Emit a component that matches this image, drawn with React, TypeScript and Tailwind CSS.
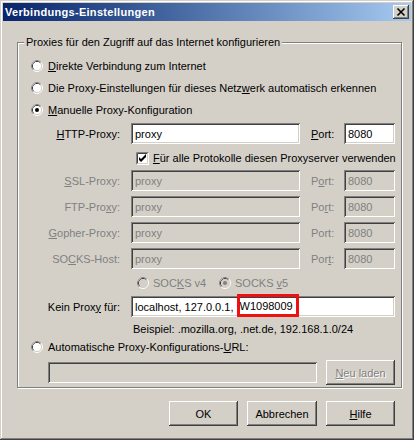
import type { ReactNode } from "react";

const sunken =
  "shadow-[inset_1px_1px_0_#808080,inset_-1px_-1px_0_#ffffff,inset_2px_2px_0_#404040,inset_-2px_-2px_0_#d4d0c8]";
const raised =
  "shadow-[inset_-1px_-1px_0_#404040,inset_1px_1px_0_#ffffff,inset_-2px_-2px_0_#808080,inset_2px_2px_0_#d4d0c8]";

function Radio({ checked = false, disabled = false }: { checked?: boolean; disabled?: boolean }) {
  return (
    <svg width="12" height="12" viewBox="0 0 12 12" className="shrink-0">
      <circle cx="6" cy="6" r="5.5" fill="none" stroke="#ffffff" />
      <path d="M2.11 9.89 A5.5 5.5 0 0 1 9.89 2.11" fill="none" stroke="#808080" />
      <circle cx="6" cy="6" r="4.5" fill="none" stroke="#d4d0c8" />
      <path d="M2.82 9.18 A4.5 4.5 0 0 1 9.18 2.82" fill="none" stroke="#404040" />
      <circle cx="6" cy="6" r="4" fill={disabled ? "#d4d0c8" : "#ffffff"} />
      {checked && <circle cx="6" cy="6" r="2" fill={disabled ? "#808080" : "#000000"} />}
    </svg>
  );
}

function Check() {
  return (
    <svg width="13" height="13" viewBox="0 0 13 13" className="shrink-0">
      <rect x="0" y="0" width="13" height="13" fill="#ffffff" />
      <path d="M0.5 12.5 V0.5 H12.5" fill="none" stroke="#808080" />
      <path d="M1.5 11.5 V1.5 H11.5" fill="none" stroke="#404040" />
      <path d="M1.5 11.5 H11.5 V1.5" fill="none" stroke="#d4d0c8" />
      <path d="M3 5 L5 7 L10 2 L10 5 L5 10 L3 8 Z" fill="#000000" />
    </svg>
  );
}

function Field({ value = "", disabled = false, w }: { value?: string; disabled?: boolean; w: string }) {
  return (
    <div
      className={`${w} h-[21px] shrink-0 flex items-center pl-[4px] ${sunken} ${
        disabled ? "bg-[#d4d0c8] text-[#808080]" : "bg-white text-black"
      }`}
    >
      {value}
    </div>
  );
}

function ProxyRow({
  label,
  port,
  disabled = false,
}: {
  label: ReactNode;
  port: ReactNode;
  disabled?: boolean;
}) {
  return (
    <div className={`flex items-center h-[21px] ${disabled ? "text-[#808080]" : "text-black"}`}>
      <div className="w-[102px] text-right">{label}</div>
      <div className="ml-[11px]">
        <Field w="w-[169px]" value="proxy" disabled={disabled} />
      </div>
      <div className="ml-[11px] w-[33px]">{port}</div>
      <Field w="w-[51px]" value="8080" disabled={disabled} />
    </div>
  );
}

function Button({ children, disabled = false, w = "w-[70px]" }: { children: ReactNode; disabled?: boolean; w?: string }) {
  return (
    <div
      className={`${w} h-[25px] flex items-center justify-center bg-[#d4d0c8] ${raised} ${
        disabled ? "text-[#808080] [text-shadow:1px_1px_0_#ffffff]" : "text-black"
      }`}
    >
      {children}
    </div>
  );
}

export default function App() {
  return (
    <div
      className={`w-[414px] h-[440px] p-[3px] bg-[#d4d0c8] text-[11px] leading-[14px] text-black font-['Liberation_Sans',Arial,sans-serif] flex flex-col shadow-[inset_-1px_-1px_0_#404040,inset_1px_1px_0_#d4d0c8,inset_-2px_-2px_0_#808080,inset_2px_2px_0_#ffffff]`}
    >
      {/* title bar */}
      <div className="h-[18px] flex items-center justify-between bg-linear-to-r from-[#0a246a] to-[#a6caf0] pl-[2px] pr-[2px]">
        <span className="text-white font-bold tracking-[0.3px]">Verbindungs-Einstellungen</span>
        <div className={`w-[16px] h-[14px] bg-[#d4d0c8] flex items-center justify-center ${raised}`}>
          <svg width="16" height="14" viewBox="0 0 16 14">
            <path d="M4.5 3.5 L11.5 10.5 M11.5 3.5 L4.5 10.5" stroke="#000000" strokeWidth="1.6" fill="none" />
          </svg>
        </div>
      </div>

      <div className="pl-[14px] pr-[9px]">
        <fieldset className="mt-[14px] border border-[#808080] shadow-[inset_1px_1px_0_#ffffff,1px_1px_0_#ffffff] h-[353px] pt-[10px]">
          <legend className="ml-[6px] px-[2px] bg-[#d4d0c8] leading-[14px]">
            Proxies für den Zugriff auf das Internet konfigurieren
          </legend>

          <div className="flex items-center gap-[5px] ml-[13px] h-[14px]">
            <Radio />
            <span>
              <u>D</u>irekte Verbindung zum Internet
            </span>
          </div>
          <div className="flex items-center gap-[5px] ml-[13px] h-[14px] mt-[8px]">
            <Radio />
            <span>
              Die Proxy-Einstellungen für dieses Netz<u>w</u>erk automatisch erkennen
            </span>
          </div>
          <div className="flex items-center gap-[5px] ml-[13px] h-[14px] mt-[8px]">
            <Radio checked />
            <span>
              <u>M</u>anuelle Proxy-Konfiguration
            </span>
          </div>

          <div className="mt-[6px]">
            <ProxyRow
              label={
                <>
                  <u>H</u>TTP-Proxy:
                </>
              }
              port={
                <>
                  <u>P</u>ort:
                </>
              }
            />
          </div>

          <div className="flex items-center gap-[4px] ml-[118px] h-[16px] mt-[6px]">
            <Check />
            <span>
              <u>F</u>ür alle Protokolle diesen Proxyserver verwenden
            </span>
          </div>

          <div className="mt-[4px] flex flex-col gap-[5px]">
            <ProxyRow
              disabled
              label={
                <>
                  <u>S</u>SL-Proxy:
                </>
              }
              port={
                <>
                  P<u>o</u>rt:
                </>
              }
            />
            <ProxyRow
              disabled
              label={
                <>
                  FTP-Pro<u>x</u>y:
                </>
              }
              port={
                <>
                  Po<u>r</u>t:
                </>
              }
            />
            <ProxyRow
              disabled
              label={
                <>
                  <u>G</u>opher-Proxy:
                </>
              }
              port={<>Port:</>}
            />
            <ProxyRow
              disabled
              label={
                <>
                  SO<u>C</u>KS-Host:
                </>
              }
              port={
                <>
                  Por<u>t</u>:
                </>
              }
            />
          </div>

          <div className="flex items-center h-[14px] mt-[7px] ml-[119px] text-[#808080]">
            <Radio disabled />
            <span className="ml-[4px] w-[66px]">
              SOC<u>K</u>S v4
            </span>
            <Radio checked disabled />
            <span className="ml-[4px]">
              SOCKS <u>v</u>5
            </span>
          </div>

          <div className="flex items-center h-[21px] mt-[6px]">
            <div className="w-[102px] text-right">
              Kein Prox<u>y</u> für:
            </div>
            <div className={`ml-[11px] w-[264px] h-[21px] bg-white flex items-center pl-[4px] ${sunken}`}>
              <span>localhost, 127.0.0.1,&nbsp;</span>
              <span className="self-start -mt-[2px] h-[23px] flex items-center border-[3px] border-[#ee1111] pr-[3px]">
                W1098009
              </span>
            </div>
          </div>

          <div className="ml-[115px] h-[14px] mt-[5px]">Beispiel: .mozilla.org, .net.de, 192.168.1.0/24</div>

          <div className="flex items-center gap-[5px] ml-[13px] h-[14px] mt-[4px]">
            <Radio />
            <span>
              Automatische Proxy-Konfigurations-<u>U</u>RL:
            </span>
          </div>

          <div className="flex items-center gap-[9px] ml-[30px] mt-[6px]">
            <Field w="w-[269px]" disabled />
            <Button disabled w="w-[69px]">
              <span>
                <u>N</u>eu laden
              </span>
            </Button>
          </div>
        </fieldset>
      </div>

      <div className="flex justify-end gap-[9px] pr-[16px] mt-[13px]">
        <Button w="w-[69px]">OK</Button>
        <Button>Abbrechen</Button>
        <Button w="w-[69px]">
          <span>
            <u>H</u>ilfe
          </span>
        </Button>
      </div>
    </div>
  );
}
